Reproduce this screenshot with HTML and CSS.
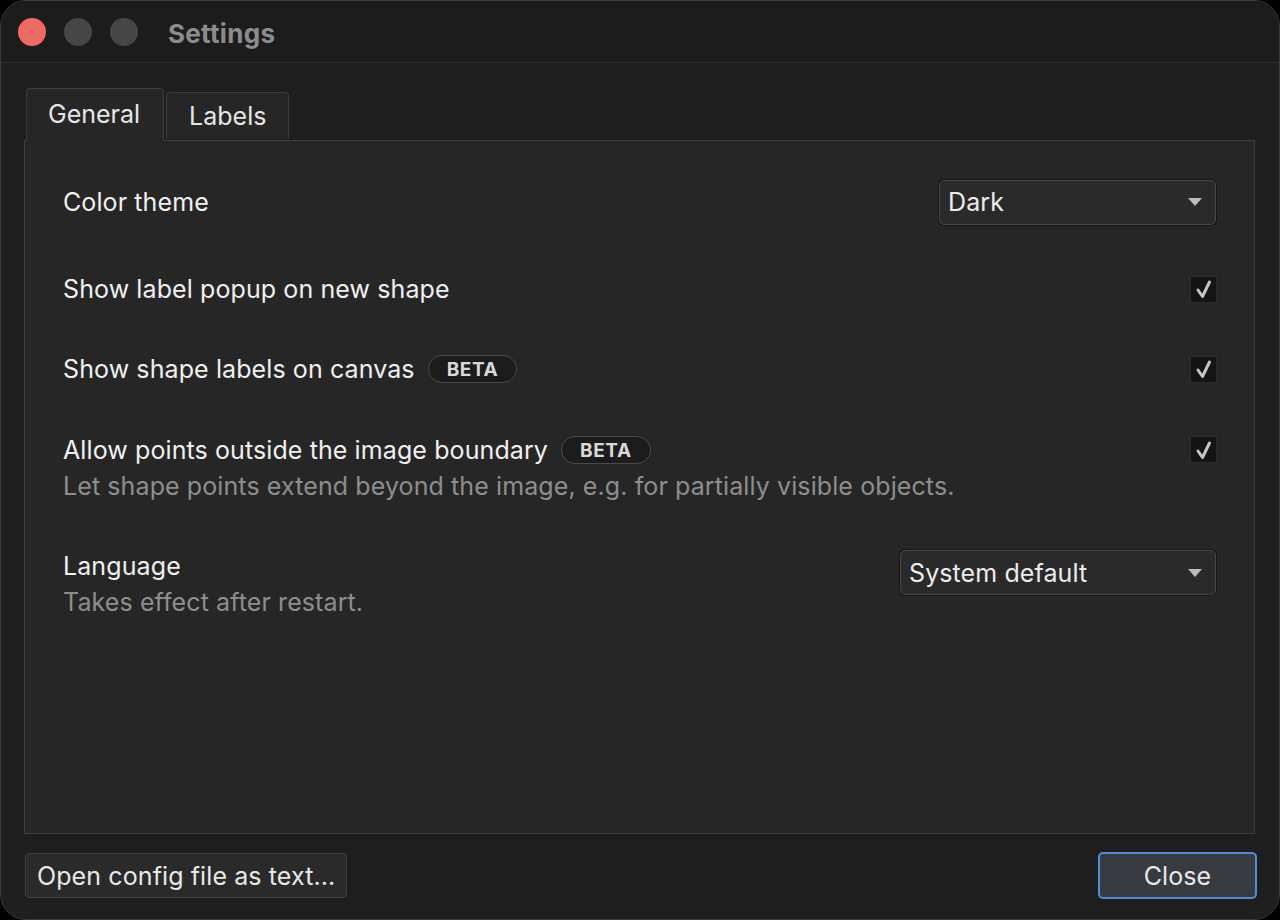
FILE: index.html
```html
<!DOCTYPE html>
<html>
<head>
<meta charset="utf-8">
<link rel="stylesheet" href="styles.css">
</head>
<body>
<div class="window">
  <div class="titlebar">
    <div class="lights">
      <span class="light red"></span>
      <span class="light gray"></span>
      <span class="light gray"></span>
    </div>
    <div class="title">Settings</div>
  </div>
  <div class="content">
    <div class="tabs">
      <div class="tab active">General</div>
      <div class="tab">Labels</div>
    </div>
    <div class="pane">
      <div class="row row-theme">
        <div class="label">Color theme</div>
        <div class="select select-theme"><span>Dark</span><span class="arrow"></span></div>
      </div>
      <div class="row row-check">
        <div class="label">Show label popup on new shape</div>
        <div class="check"><svg viewBox="0 0 24 24" width="24" height="24"><path d="M6 13 L10.5 19.5 L17.5 5" fill="none" stroke="#c4c4c4" stroke-width="3" stroke-linecap="round" stroke-linejoin="round"/></svg></div>
      </div>
      <div class="row row-check">
        <div class="label">Show shape labels on canvas <span class="badge">BETA</span></div>
        <div class="check"><svg viewBox="0 0 24 24" width="24" height="24"><path d="M6 13 L10.5 19.5 L17.5 5" fill="none" stroke="#c4c4c4" stroke-width="3" stroke-linecap="round" stroke-linejoin="round"/></svg></div>
      </div>
      <div class="row row-check row-desc">
        <div class="textcol">
          <div class="label">Allow points outside the image boundary <span class="badge">BETA</span></div>
          <div class="desc">Let shape points extend beyond the image, e.g. for partially visible objects.</div>
        </div>
        <div class="check"><svg viewBox="0 0 24 24" width="24" height="24"><path d="M6 13 L10.5 19.5 L17.5 5" fill="none" stroke="#c4c4c4" stroke-width="3" stroke-linecap="round" stroke-linejoin="round"/></svg></div>
      </div>
      <div class="row row-lang">
        <div class="textcol">
          <div class="label">Language</div>
          <div class="desc">Takes effect after restart.</div>
        </div>
        <div class="select select-lang"><span>System default</span><span class="arrow"></span></div>
      </div>
    </div>
    <div class="footer">
      <div class="btn">Open config file as text...</div>
      <div class="btn primary">Close</div>
    </div>
  </div>
</div>
</body>
</html>
```
FILE: styles.css
```css
html, body {
  margin: 0;
  padding: 0;
  background: #000;
  width: 1280px;
  height: 920px;
  overflow: hidden;
}
body {
  font-family: Inter, "Noto Sans", "Liberation Sans", sans-serif;
  color: #e8e8e8;
}
.window {
  width: 1280px;
  height: 920px;
  box-sizing: border-box;
  background: #1e1e1e;
  border-radius: 26px;
  border: 1px solid #3a3a3a;
  overflow: hidden;
  display: flex;
  flex-direction: column;
}
.titlebar {
  height: 62px;
  box-sizing: border-box;
  border-bottom: 1px solid #2a2a2a;
  display: flex;
  align-items: center;
  padding-left: 17px;
  background: #1c1c1c;
}
.lights {
  display: flex;
  gap: 18px;
}
.light {
  width: 28px;
  height: 28px;
  border-radius: 50%;
  display: block;
}
.light.red { background: #ec6a5e; }
.light.gray { background: #464646; }
.title {
  margin-left: 30px;
  padding-top: 3px;
  font-size: 26px;
  font-weight: 700;
  color: #8c8c8c;
  letter-spacing: 0.3px;
}
.content {
  flex: 1;
  display: flex;
  flex-direction: column;
  padding: 25px 24px 0 23px;
}
.tabs {
  display: flex;
  align-items: flex-end;
  gap: 2px;
  padding-left: 2px;
  height: 52px;
  position: relative;
  z-index: 1;
}
.tab {
  box-sizing: border-box;
  height: 47px;
  padding: 0 22px;
  background: #262626;
  border: 1px solid #3a3a3a;
  border-bottom: none;
  border-radius: 4px 4px 0 0;
  font-size: 25px;
  display: flex;
  align-items: center;
  color: #e6e6e6;
  margin-bottom: 1px;
}
.tab.active {
  height: 53px;
  padding: 0 23px 3px 21px;
  background: #262626;
  margin-bottom: -1px;
}
.pane {
  box-sizing: border-box;
  height: 694px;
  background: #262626;
  border: 1px solid #3e3e3e;
  padding: 38px 38px 0 38px;
  display: flex;
  flex-direction: column;
}
.row {
  display: flex;
  justify-content: space-between;
  align-items: center;
}
.label {
  font-size: 25px;
  color: #f0f0f0;
  display: flex;
  align-items: center;
  letter-spacing: 0.1px;
}
.desc {
  font-size: 25px;
  color: #8e8e8e;
  margin-top: 6px;
  letter-spacing: 0.1px;
}
.row-theme { height: 46px; }
.row-check { margin-top: 45px; height: 38px; }
.row-check + .row-check { margin-top: 42px; }
.row-check + .row-desc { margin-top: 47px; }
.row-desc { align-items: flex-start; height: auto; }
.row-desc .check { margin-top: 2px; }
.row-lang { margin-top: 50px; align-items: flex-start; }
.row-lang .select { margin-top: -1px; }
.select {
  box-sizing: border-box;
  height: 45px;
  border: 1px solid #474747;
  border-radius: 5px;
  background: #2a2a2a;
  box-shadow: 0 0 0 1px #151515;
  display: flex;
  align-items: center;
  justify-content: space-between;
  padding: 0 13px 0 8px;
  font-size: 25px;
  color: #ececec;
  letter-spacing: 0.1px;
}
.select-theme { width: 277px; }
.select-lang { width: 316px; }
.arrow {
  width: 0;
  height: 0;
  border-left: 7px solid transparent;
  border-right: 7px solid transparent;
  border-top: 8px solid #bcbcbc;
}
.check {
  width: 25px;
  height: 25px;
  background: #141414;
  box-shadow: 0 0 2px 1px #303030;
  display: flex;
  align-items: center;
  justify-content: center;
}
.badge {
  margin-left: 13px;
  box-sizing: border-box;
  height: 28px;
  padding: 0 18px;
  border: 1px solid #4a4a4a;
  border-radius: 14px;
  background: #1c1c1c;
  font-size: 19px;
  font-weight: 700;
  color: #d8d8d8;
  display: inline-flex;
  align-items: center;
  letter-spacing: 0.6px;
}
.footer {
  display: flex;
  justify-content: space-between;
  align-items: center;
  margin-top: 18px;
  padding-left: 1px;
  margin-right: -2px;
}
.btn {
  box-sizing: border-box;
  height: 45px;
  padding: 0 11px;
  border: 1px solid #3e3e3e;
  border-radius: 4px;
  background: #2a2a2a;
  font-size: 25px;
  color: #e8e8e8;
  display: flex;
  align-items: center;
  letter-spacing: 0.1px;
}
.btn.primary {
  height: 47px;
  width: 159px;
  padding: 0;
  justify-content: center;
  border: 2px solid #4f8ed6;
  background: #373a3f;
  border-radius: 5px;
}
```
